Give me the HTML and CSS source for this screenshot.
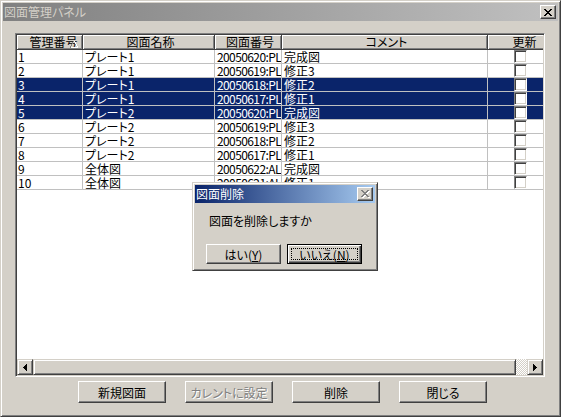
FILE: index.html
```html
<!DOCTYPE html>
<html lang="ja">
<head>
<meta charset="utf-8">
<title>図面管理パネル</title>
<link rel="stylesheet" href="styles.css">
</head>
<body>
<div class="window">
  <div class="titlebar inactive">
    <span class="title-text">図面管理パネル</span>
    <span class="tb-btn">
      <svg class="xglyph" width="8" height="7" viewBox="0 0 8 7" shape-rendering="crispEdges"><path fill="#000" d="M0 0h2v1H0zM6 0h2v1H6zM1 1h2v1H1zM5 1h2v1H5zM2 2h4v1H2zM3 3h2v1H3zM2 4h4v1H2zM1 5h2v1H1zM5 5h2v1H5zM0 6h2v1H0zM6 6h2v1H6z"/></svg>
    </span>
  </div>
  <div class="client">
    <div class="listview">
      <div class="lv-viewport">
        <div class="lv-header">
          <div class="hcell c1">管理番号<svg class="sort" width="8" height="7" viewBox="0 0 8 7" shape-rendering="crispEdges"><path fill="#808080" d="M3 0h1v1H3zM2 1h1v2H2zM1 3h1v2H1zM0 5h1v2H0z"/><path fill="#fff" d="M4 0h1v1H4zM5 1h1v2H5zM6 3h1v2H6zM7 5h1v2H7zM1 6h6v1H1z"/></svg></div>
          <div class="hcell c2">図面名称</div>
          <div class="hcell c3">図面番号</div>
          <div class="hcell c4">コメント</div>
          <div class="hcell c5">更新</div>
        </div>
        <div class="lv-row"><div class="cell c1">1</div><div class="cell c2">プレート1</div><div class="cell c3 num">20050620:PL</div><div class="cell c4">完成図</div><div class="cell c5"><span class="chk"></span></div></div>
        <div class="lv-row"><div class="cell c1">2</div><div class="cell c2">プレート1</div><div class="cell c3 num">20050619:PL</div><div class="cell c4">修正3</div><div class="cell c5"><span class="chk"></span></div></div>
        <div class="lv-row sel"><div class="cell c1">3</div><div class="cell c2">プレート1</div><div class="cell c3 num">20050618:PL</div><div class="cell c4">修正2</div><div class="cell c5"><span class="chk"></span></div></div>
        <div class="lv-row sel"><div class="cell c1">4</div><div class="cell c2">プレート1</div><div class="cell c3 num">20050617:PL</div><div class="cell c4">修正1</div><div class="cell c5"><span class="chk"></span></div></div>
        <div class="lv-row sel"><div class="cell c1">5</div><div class="cell c2">プレート2</div><div class="cell c3 num">20050620:PL</div><div class="cell c4">完成図</div><div class="cell c5"><span class="chk"></span></div></div>
        <div class="lv-row"><div class="cell c1">6</div><div class="cell c2">プレート2</div><div class="cell c3 num">20050619:PL</div><div class="cell c4">修正3</div><div class="cell c5"><span class="chk"></span></div></div>
        <div class="lv-row"><div class="cell c1">7</div><div class="cell c2">プレート2</div><div class="cell c3 num">20050618:PL</div><div class="cell c4">修正2</div><div class="cell c5"><span class="chk"></span></div></div>
        <div class="lv-row"><div class="cell c1">8</div><div class="cell c2">プレート2</div><div class="cell c3 num">20050617:PL</div><div class="cell c4">修正1</div><div class="cell c5"><span class="chk"></span></div></div>
        <div class="lv-row"><div class="cell c1">9</div><div class="cell c2">全体図</div><div class="cell c3 num">20050622:AL</div><div class="cell c4">完成図</div><div class="cell c5"><span class="chk"></span></div></div>
        <div class="lv-row"><div class="cell c1">10</div><div class="cell c2">全体図</div><div class="cell c3 num">20050621:AL</div><div class="cell c4">修正1</div><div class="cell c5"><span class="chk"></span></div></div>
      </div>
      <div class="hscroll">
        <div class="sb-btn"><svg width="4" height="7" viewBox="0 0 4 7" shape-rendering="crispEdges"><path fill="#000" d="M3 0h1v7H3zM2 1h1v5H2zM1 2h1v3H1zM0 3h1v1H0z"/></svg></div>
        <div class="sb-thumb"></div>
        <div class="sb-track"></div>
        <div class="sb-btn"><svg width="4" height="7" viewBox="0 0 4 7" shape-rendering="crispEdges"><path fill="#000" d="M0 0h1v7H0zM1 1h1v5H1zM2 2h1v3H2zM3 3h1v1H3z"/></svg></div>
      </div>
    </div>
    <div class="actions">
      <button class="btn">新規図面</button>
      <button class="btn" disabled>カレントに設定</button>
      <button class="btn">削除</button>
      <button class="btn">閉じる</button>
    </div>
  </div>

  <div class="dialog">
    <div class="titlebar active">
      <span class="title-text">図面削除</span>
      <span class="tb-btn">
        <svg class="xglyph" width="9" height="8" viewBox="0 0 9 8" shape-rendering="crispEdges"><path fill="#fff" transform="translate(1 1)" d="M0 0h2v1H0zM6 0h2v1H6zM1 1h2v1H1zM5 1h2v1H5zM2 2h4v1H2zM3 3h2v1H3zM2 4h4v1H2zM1 5h2v1H1zM5 5h2v1H5zM0 6h2v1H0zM6 6h2v1H6z"/><path fill="#808080" d="M0 0h2v1H0zM6 0h2v1H6zM1 1h2v1H1zM5 1h2v1H5zM2 2h4v1H2zM3 3h2v1H3zM2 4h4v1H2zM1 5h2v1H1zM5 5h2v1H5zM0 6h2v1H0zM6 6h2v1H6z"/></svg>
      </span>
    </div>
    <div class="dlg-msg">図面を削除しますか</div>
    <div class="dlg-buttons">
      <button class="btn dbtn">はい(<u>Y</u>)</button>
      <button class="btn dbtn default">いいえ(<u>N</u>)</button>
    </div>
  </div>
</div>
</body>
</html>
```
FILE: styles.css
```css
* {
  box-sizing: border-box;
}

body {
  margin: 0;
  font-family: "Noto Sans CJK JP", sans-serif;
  font-size: 12px;
  font-feature-settings: "palt";
  color: #000;
}

.window {
  position: relative;
  width: 561px;
  height: 417px;
  background: #d4d0c8;
  border: 1px solid;
  border-color: #d4d0c8 #404040 #404040 #d4d0c8;
  box-shadow: inset 1px 1px #fff, inset -1px -1px #808080;
  padding: 2px;
  display: flex;
  flex-direction: column;
}

.titlebar {
  flex: none;
  height: 18px;
  display: flex;
  align-items: center;
  justify-content: space-between;
  padding: 0 2px 0 1px;
}

.titlebar.inactive {
  background: linear-gradient(to right, #808080, #c0c0c0);
  color: #d4d0c8;
}

.titlebar.active {
  background: linear-gradient(to right, #0a246a, #a6caf0);
  color: #fff;
}

.title-text {
  line-height: 18px;
  white-space: nowrap;
}

.tb-btn {
  width: 16px;
  height: 14px;
  background: #d4d0c8;
  border: 1px solid;
  border-color: #fff #404040 #404040 #fff;
  box-shadow: inset -1px -1px #808080;
  display: flex;
  align-items: center;
  justify-content: center;
}

.xglyph {
  display: block;
}

.client {
  flex: 1;
  padding: 12px 13px 0 12px;
  display: flex;
  flex-direction: column;
}

.listview {
  flex: none;
  height: 344px;
  border: 1px solid;
  border-color: #808080 #fff #fff #808080;
  box-shadow: inset 1px 1px #404040, inset -1px -1px #d4d0c8;
  padding: 1px;
  background: #fff;
  display: flex;
  flex-direction: column;
}

.lv-viewport {
  flex: 1;
  overflow: hidden;
  background: #fff;
}

.lv-header,
.lv-row {
  display: flex;
  width: max-content;
}

.hcell {
  flex: none;
  position: relative;
  height: 15px;
  line-height: 14px;
  text-align: center;
  background: #d4d0c8;
  border-right: 1px solid #404040;
  border-bottom: 1px solid #404040;
  box-shadow: inset 1px 1px #fff, inset -1px -1px #808080;
  padding-left: 4px;
  white-space: nowrap;
}

.hcell.c1 {
  padding-left: 8px;
}

.sort {
  position: absolute;
  right: 4px;
  top: 6px;
}

.c1 { width: 66px; }
.c2 { width: 132px; }
.c3 { width: 67px; }
.c4 { width: 206px; }
.c5 { width: 70px; }

.cell {
  flex: none;
  height: 14px;
  line-height: 13px;
  border-right: 1px solid #c0c0c0;
  border-bottom: 1px solid #c0c0c0;
  padding-left: 2px;
  white-space: nowrap;
  overflow-x: clip;
}

.cell.c1 {
  padding-left: 1px;
}

.num {
  letter-spacing: -0.6px;
}

.lv-row.sel {
  background: #0a246a;
  color: #fff;
}

.chk {
  display: block;
  width: 13px;
  height: 13px;
  margin-left: 24px;
  background: #fff;
  border: 1px solid;
  border-color: #808080 #fff #fff #808080;
  box-shadow: inset 1px 1px #404040, inset -1px -1px #d4d0c8;
}

.hscroll {
  flex: none;
  height: 16px;
  display: flex;
}

.sb-btn,
.sb-thumb {
  height: 16px;
  background: #d4d0c8;
  border: 1px solid;
  border-color: #d4d0c8 #404040 #404040 #d4d0c8;
  box-shadow: inset 1px 1px #fff, inset -1px -1px #808080;
}

.sb-btn {
  flex: none;
  width: 16px;
  display: flex;
  align-items: center;
  justify-content: center;
}

.sb-btn svg {
  display: block;
}

.sb-thumb {
  flex: 1;
}

.sb-track {
  flex: none;
  width: 11px;
  background: repeating-conic-gradient(#fff 0 25%, #d4d0c8 0 50%) 0 0 / 2px 2px;
}

.actions {
  display: flex;
  gap: 19px;
  padding-left: 63px;
  margin-top: 4px;
}

.btn {
  width: 88px;
  height: 22px;
  padding: 0;
  font: inherit;
  color: #000;
  background: #d4d0c8;
  border: 1px solid;
  border-color: #fff #404040 #404040 #fff;
  box-shadow: inset -1px -1px #808080;
  white-space: nowrap;
}

.btn:disabled {
  color: #808080;
  text-shadow: 1px 1px #fff;
}

.dialog {
  position: absolute;
  left: 191px;
  top: 181px;
  width: 186px;
  height: 89px;
  background: #d4d0c8;
  border: 1px solid;
  border-color: #d4d0c8 #404040 #404040 #d4d0c8;
  box-shadow: inset 1px 1px #fff, inset -1px -1px #808080;
  padding: 2px;
  display: flex;
  flex-direction: column;
}

.dlg-msg {
  padding: 11px 0 0 14px;
  line-height: 14px;
}

.dlg-buttons {
  display: flex;
  gap: 6px;
  padding-left: 11px;
  margin-top: 16px;
}

.dbtn {
  width: 75px;
  height: 20px;
}

.dbtn.default {
  position: relative;
  border: 1px solid #000;
  box-shadow: inset 1px 1px #fff, inset -1px -1px #404040, inset -2px -2px #808080;
}

.dbtn.default::after {
  content: "";
  position: absolute;
  inset: 3px;
  border: 1px dotted #000;
}
```
